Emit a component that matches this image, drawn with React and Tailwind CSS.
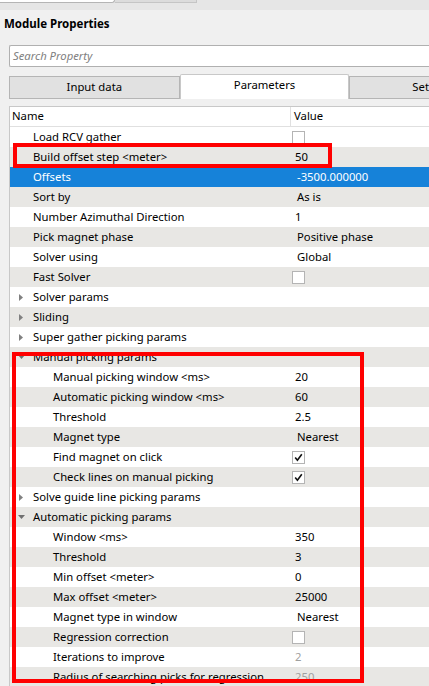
import React from 'react';

const rows = [
  { label: 'Load RCV gather', level: 1, check: false },
  { label: 'Build offset step <meter>', level: 1, value: '50' },
  { label: 'Offsets', level: 1, value: '-3500.000000', selected: true, combo: true },
  { label: 'Sort by', level: 1, value: 'As is', combo: true },
  { label: 'Number Azimuthal Direction', level: 1, value: '1' },
  { label: 'Pick magnet phase', level: 1, value: 'Positive phase', combo: true },
  { label: 'Solver using', level: 1, value: 'Global', combo: true },
  { label: 'Fast Solver', level: 1, check: false },
  { label: 'Solver params', level: 1, group: 'closed' },
  { label: 'Sliding', level: 1, group: 'closed' },
  { label: 'Super gather picking params', level: 1, group: 'closed' },
  { label: 'Manual picking params', level: 1, group: 'open' },
  { label: 'Manual picking window <ms>', level: 2, value: '20' },
  { label: 'Automatic picking window <ms>', level: 2, value: '60' },
  { label: 'Threshold', level: 2, value: '2.5' },
  { label: 'Magnet type', level: 2, value: 'Nearest', combo: true },
  { label: 'Find magnet on click', level: 2, check: true },
  { label: 'Check lines on manual picking', level: 2, check: true },
  { label: 'Solve guide line picking params', level: 1, group: 'closed' },
  { label: 'Automatic picking params', level: 1, group: 'open' },
  { label: 'Window <ms>', level: 2, value: '350' },
  { label: 'Threshold', level: 2, value: '3' },
  { label: 'Min offset <meter>', level: 2, value: '0' },
  { label: 'Max offset <meter>', level: 2, value: '25000' },
  { label: 'Magnet type in window', level: 2, value: 'Nearest', combo: true },
  { label: 'Regression correction', level: 2, check: false },
  { label: 'Iterations to improve', level: 2, value: '2', disabled: true },
  { label: 'Radius of searching picks for regression', level: 2, value: '250', disabled: true },
];

function Arrow({ open }) {
  if (open) {
    return (
      <svg width="7" height="5" viewBox="0 0 7 5" className="absolute left-[8px] top-[8px]">
        <path d="M0 0 L7 0 L3.5 4 Z" fill="#707070" />
      </svg>
    );
  }
  return (
    <svg width="4" height="7" viewBox="0 0 4 7" className="absolute left-[9px] top-[7px]">
      <path d="M0 0 L4 3.5 L0 7 Z" fill="#808080" />
    </svg>
  );
}

function Check({ on }) {
  return (
    <div className="w-[13px] h-[13px] bg-white border border-[#b4b4b4] flex items-center justify-center">
      {on && (
        <svg width="9" height="9" viewBox="0 0 9 9">
          <path d="M1.2 4.6 L3.4 7.2 L7.8 1.2" fill="none" stroke="#111" strokeWidth="1.6" />
        </svg>
      )}
    </div>
  );
}

export default function App() {
  return (
    <div
      className="w-[429px] h-[686px] bg-[#f0f0f0] overflow-hidden relative text-[11.3px] text-black"
      style={{ fontFamily: '"Noto Sans", "Open Sans", sans-serif' }}
    >
      {/* top strip */}
      <div className="h-[10px] bg-[#e6e6e6] flex items-start">
        <div className="w-[115px] h-[3px] bg-white border-b border-r border-[#b5b5b5] rounded-br-[3px]"></div>
        <div className="w-[82px] h-[3px] bg-[#dcdcdc] border-b border-r border-[#c5c5c5]"></div>
      </div>

      <div className="h-[28px] flex items-center pl-[4px] font-bold text-[11.5px]">Module Properties</div>

      {/* search */}
      <div className="mt-[7px] ml-[9px] h-[22px] bg-white border border-[#b0b0b0] rounded-l-[2px] flex items-center pl-[3px] border-r-0">
        <span className="italic text-[#808080]">Search Property</span>
      </div>

      {/* tabs */}
      <div className="mt-[7px] ml-[9px] h-[25px] flex items-end">
        <div className="w-[171px] h-[23px] bg-[#e1e1e1] border border-[#b5b5b5] flex items-center justify-center">Input data</div>
        <div className="w-[170px] h-[25px] bg-white border border-b-0 border-[#c8c8c8] rounded-t-[2px] flex items-center justify-center pb-[3px]">Parameters</div>
        <div className="flex-1 h-[23px] bg-[#e1e1e1] border border-r-0 border-[#b5b5b5] flex items-center pl-[62px]">Set</div>
      </div>

      {/* table */}
      <div className="mt-[7px] ml-[9px] bg-white border-l border-t border-[#c8c8c8]">
        <div className="h-[20px] flex border-b border-[#e0e0e0]">
          <div className="w-[281px] pl-[2px] flex items-center border-r border-[#e0e0e0]">Name</div>
          <div className="flex-1 pl-[3px] flex items-center">Value</div>
        </div>
        {rows.map((r, i) => {
          const bg = r.selected ? 'bg-[#1682d9]' : i % 2 === 1 ? 'bg-[#e8e7e4]' : 'bg-white';
          return (
            <div key={i} className={`h-[20px] flex relative ${bg} ${r.selected ? 'text-white' : ''}`}>
              {r.group && <Arrow open={r.group === 'open'} />}
              <div className={`w-[282px] flex items-center whitespace-nowrap pt-[1px] ${r.level === 2 ? 'pl-[43px]' : 'pl-[23px]'}`}>
                {r.label}
              </div>
              <div className="flex-1 flex items-center pt-[1px]">
                {r.check !== undefined ? (
                  <Check on={r.check} />
                ) : r.value !== undefined ? (
                  <span className={`${r.combo ? 'pl-[5px]' : 'pl-[3px]'} ${r.disabled ? 'text-[#a0a0a0]' : ''}`}>{r.value}</span>
                ) : null}
              </div>
            </div>
          );
        })}
      </div>

      {/* highlight overlays */}
      <div className="absolute left-[13px] top-[143px] w-[319px] h-[25px] border-[4px] border-[#ff0000]"></div>
      <div className="absolute left-[12px] top-[352px] w-[352px] h-[331px] border-[4px] border-[#ff0000]"></div>
    </div>
  );
}
